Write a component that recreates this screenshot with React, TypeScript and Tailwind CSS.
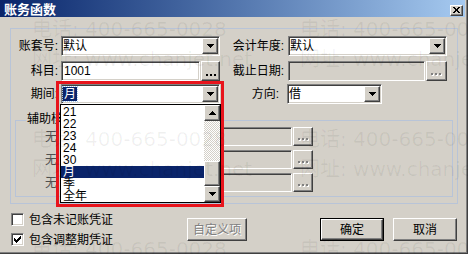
import React from "react";

const raised =
  "bg-[#d4d0c8] border border-t-white border-l-white border-r-[#404040] border-b-[#404040] shadow-[inset_-1px_-1px_#808080]";
const sunken =
  "border border-t-[#808080] border-l-[#808080] border-r-white border-b-white shadow-[inset_1px_1px_#404040,inset_-1px_-1px_#d4d0c8]";

function Tri({ up = false }: { up?: boolean }) {
  return (
    <svg width="7" height="4" viewBox="0 0 7 4" shapeRendering="crispEdges" className={up ? "rotate-180" : ""}>
      <path d="M0 0h7v1H0zM1 1h5v1H1zM2 2h3v1H2zM3 3h1v1H3z" fill="#000" />
    </svg>
  );
}

function Dots({ disabled = false }: { disabled?: boolean }) {
  if (disabled)
    return (
      <svg width="11" height="3" viewBox="0 0 11 3" shapeRendering="crispEdges">
        <path d="M1 1h2v2H1zM5 1h2v2H5zM9 1h2v2H9z" fill="#fff" />
        <path d="M0 0h2v2H0zM4 0h2v2H4zM8 0h2v2H8z" fill="#808080" />
      </svg>
    );
  return (
    <svg width="10" height="2" viewBox="0 0 10 2" shapeRendering="crispEdges">
      <path d="M0 0h2v2H0zM4 0h2v2H4zM8 0h2v2H8z" fill="#000" />
    </svg>
  );
}

function Combo({ className, children }: { className: string; children?: React.ReactNode }) {
  return (
    <div className={`${sunken} ${className} h-[20px] bg-white p-[1px] flex items-center`}>
      <div className="flex-1 flex items-center leading-[14px]">{children}</div>
      <div className={`${raised} w-[16px] h-[16px] flex items-center justify-center`}>
        <Tri />
      </div>
    </div>
  );
}

function DotsButton({ className, disabled = false }: { className: string; disabled?: boolean }) {
  return (
    <div className={`${raised} ${className} flex items-end justify-center pb-[4px]`}>
      <Dots disabled={disabled} />
    </div>
  );
}

function Check({ checked = false }: { checked?: boolean }) {
  return (
    <div className={`${sunken} w-[13px] h-[13px] bg-white flex items-center justify-center`}>
      {checked && (
        <svg width="7" height="7" viewBox="0 0 7 7" shapeRendering="crispEdges">
          <path
            d="M6 0h1v1H6zM5 1h2v1H5zM0 2h1v1H0zM4 2h3v1H4zM0 3h2v1H0zM3 3h3v1H3zM0 4h5v1H0zM1 5h3v1H1zM2 6h1v1H2z"
            fill="#000"
          />
        </svg>
      )}
    </div>
  );
}

function AuxRow({ first = false }: { first?: boolean }) {
  return (
    <div className={`flex h-[19px] items-center ${first ? "" : "mt-[4px]"}`}>
      <span className="w-[42px] text-right pr-[1px] text-[#505050]">无</span>
      <div className={`${sunken} ml-[3px] w-[231px] h-[19px] bg-[#d4d0c8]`} />
      <DotsButton className="ml-[1px] w-[20px] h-[19px]" disabled />
    </div>
  );
}

const periods = ["21", "22", "23", "24", "30", "月", "季", "全年"];

export default function App() {
  return (
    <div className="relative w-[468px] h-[254px] overflow-hidden bg-[#d4d0c8] text-[12px] text-black font-['Liberation_Sans','Noto_Sans_CJK_SC',sans-serif] shadow-[inset_-1px_-1px_#404040,inset_-2px_-2px_#808080]">
      {/* title bar */}
      <div className="w-[465px] h-[17px] flex items-center justify-between pl-[4px] pr-[2px] bg-linear-to-r from-[#0a246a] to-[#a6caf0]">
        <span className="text-white font-bold text-[13px] leading-[17px] font-['Noto_Sans_CJK_SC',sans-serif]">账务函数</span>
        <div className={`${raised} w-[13px] h-[11px] mt-[3px] flex items-center justify-center`}>
          <svg width="7" height="6" viewBox="0 0 7 6" shapeRendering="crispEdges">
            <path d="M0 0h2v1H0zM5 0h2v1H5zM1 1h2v1H1zM4 1h2v1H4zM2 2h3v2H2zM1 4h2v1H1zM4 4h2v1H4zM0 5h2v1H0zM5 5h2v1H5z" fill="#000" />
          </svg>
        </div>
      </div>

      <div className="pl-[10px] pt-[11px]">
        {/* main panel */}
        <div className="w-[448px] h-[176px] border border-[#b8c4d8] pt-[7px]">
          <div className="flex h-[20px] items-center">
            <span className="w-[47px] text-right">账套号:</span>
            <Combo className="ml-[3px] w-[159px]">默认</Combo>
            <span className="w-[66px] text-right pr-[2px]">会计年度:</span>
            <Combo className="ml-[2px] w-[159px]">默认</Combo>
          </div>

          <div className="flex h-[20px] items-center mt-[5px]">
            <span className="w-[47px] text-right">科目:</span>
            <div className={`${sunken} ml-[3px] w-[139px] h-[20px] bg-white flex items-center pl-[2px]`}>1001</div>
            <DotsButton className="ml-[1px] w-[19px] h-[20px]" />
            <span className="w-[66px] text-right pr-[2px]">截止日期:</span>
            <div className={`${sunken} ml-[2px] w-[137px] h-[20px] bg-[#d4d0c8]`} />
            <DotsButton className="ml-[1px] w-[21px] h-[20px]" disabled />
          </div>

          <div className="flex h-[20px] items-center mt-[3px]">
            <span className="w-[47px] text-right">期间:</span>
            <Combo className="ml-[3px] w-[159px]">
              <span className="bg-[#0a246a] text-white h-[14px] leading-[14px] px-[1px] outline-1 outline-dotted outline-[#a6caf0]">月</span>
            </Combo>
            <span className="w-[66px] text-right pr-[7px]">方向:</span>
            <Combo className="ml-[1px] w-[95px]">借</Combo>
          </div>

          {/* 辅助核算 group */}
          <div className="relative mt-[16px] ml-[4px] w-[438px] h-[77px] border border-[#b8c4d8] pt-[6px]">
            <span className="absolute left-[10px] -top-[9px] h-[14px] leading-[14px] px-[1px] bg-[#d4d0c8]">辅助核算</span>
            <AuxRow first />
            <AuxRow />
            <AuxRow />
          </div>
        </div>

        {/* bottom area */}
        <div className="flex items-start mt-[9px]">
          <div className="w-[177px] flex flex-col gap-[7px]">
            <label className="flex items-center h-[13px] ml-[1px]">
              <Check />
              <span className="ml-[5px]">包含未记账凭证</span>
            </label>
            <label className="flex items-center h-[13px] ml-[1px]">
              <Check checked />
              <span className="ml-[5px]">包含调整期凭证</span>
            </label>
          </div>
          <div className={`${raised} mt-[5px] w-[60px] h-[23px] flex items-center justify-center text-[#808080] [text-shadow:1px_1px_0_#ffffff]`}>
            自定义项
          </div>
          <div className="mt-[5px] ml-[73px] w-[64px] h-[23px] border border-black">
            <div className={`${raised} w-full h-full flex items-center justify-center`}>确定</div>
          </div>
          <div className={`${raised} mt-[5px] ml-[9px] w-[64px] h-[23px] flex items-center justify-center`}>取消</div>
        </div>
      </div>

      {/* open drop-down list of 期间 */}
      <div className="absolute left-[60px] top-[104px] w-[161px] h-[99px] border border-black bg-white flex">
        <div className="flex-1 pt-[1px]">
          {periods.map((p) => (
            <div
              key={p}
              className={`h-[12px] leading-[12px] pl-[2px] ${p === "月" ? "bg-[#0a246a] text-white" : ""}`}
            >
              {p}
            </div>
          ))}
        </div>
        <div className="w-[16px] flex flex-col">
          <div className={`${raised} h-[16px] flex items-center justify-center`}>
            <Tri up />
          </div>
          <div className="flex-1 bg-[conic-gradient(#d4d0c8_25%,#ffffff_0_50%,#d4d0c8_0_75%,#ffffff_0)] bg-[length:2px_2px]" />
          <div className={`${raised} h-[25px]`} />
          <div className={`${raised} h-[16px] flex items-center justify-center`}>
            <Tri />
          </div>
        </div>
      </div>

      {/* red highlight box */}
      <div className="absolute left-[56px] top-[81px] w-[168px] h-[126px] border-[3px] border-[#e8141c]" />

      {/* watermark */}
      <div className="pointer-events-none absolute left-[32px] top-[17px] grid grid-cols-[268px_268px] gap-y-[56px] text-[20px] leading-[24px] whitespace-nowrap text-black/[0.06] font-['DejaVu_Sans','Noto_Sans_CJK_SC',sans-serif]">
        {Array.from({ length: 6 }).map((_, i) => (
          <div key={i} className="flex flex-col gap-[6px]">
            <span>电话: 400-665-0028</span>
            <span>网址: www.chanjet.net</span>
          </div>
        ))}
      </div>
    </div>
  );
}
